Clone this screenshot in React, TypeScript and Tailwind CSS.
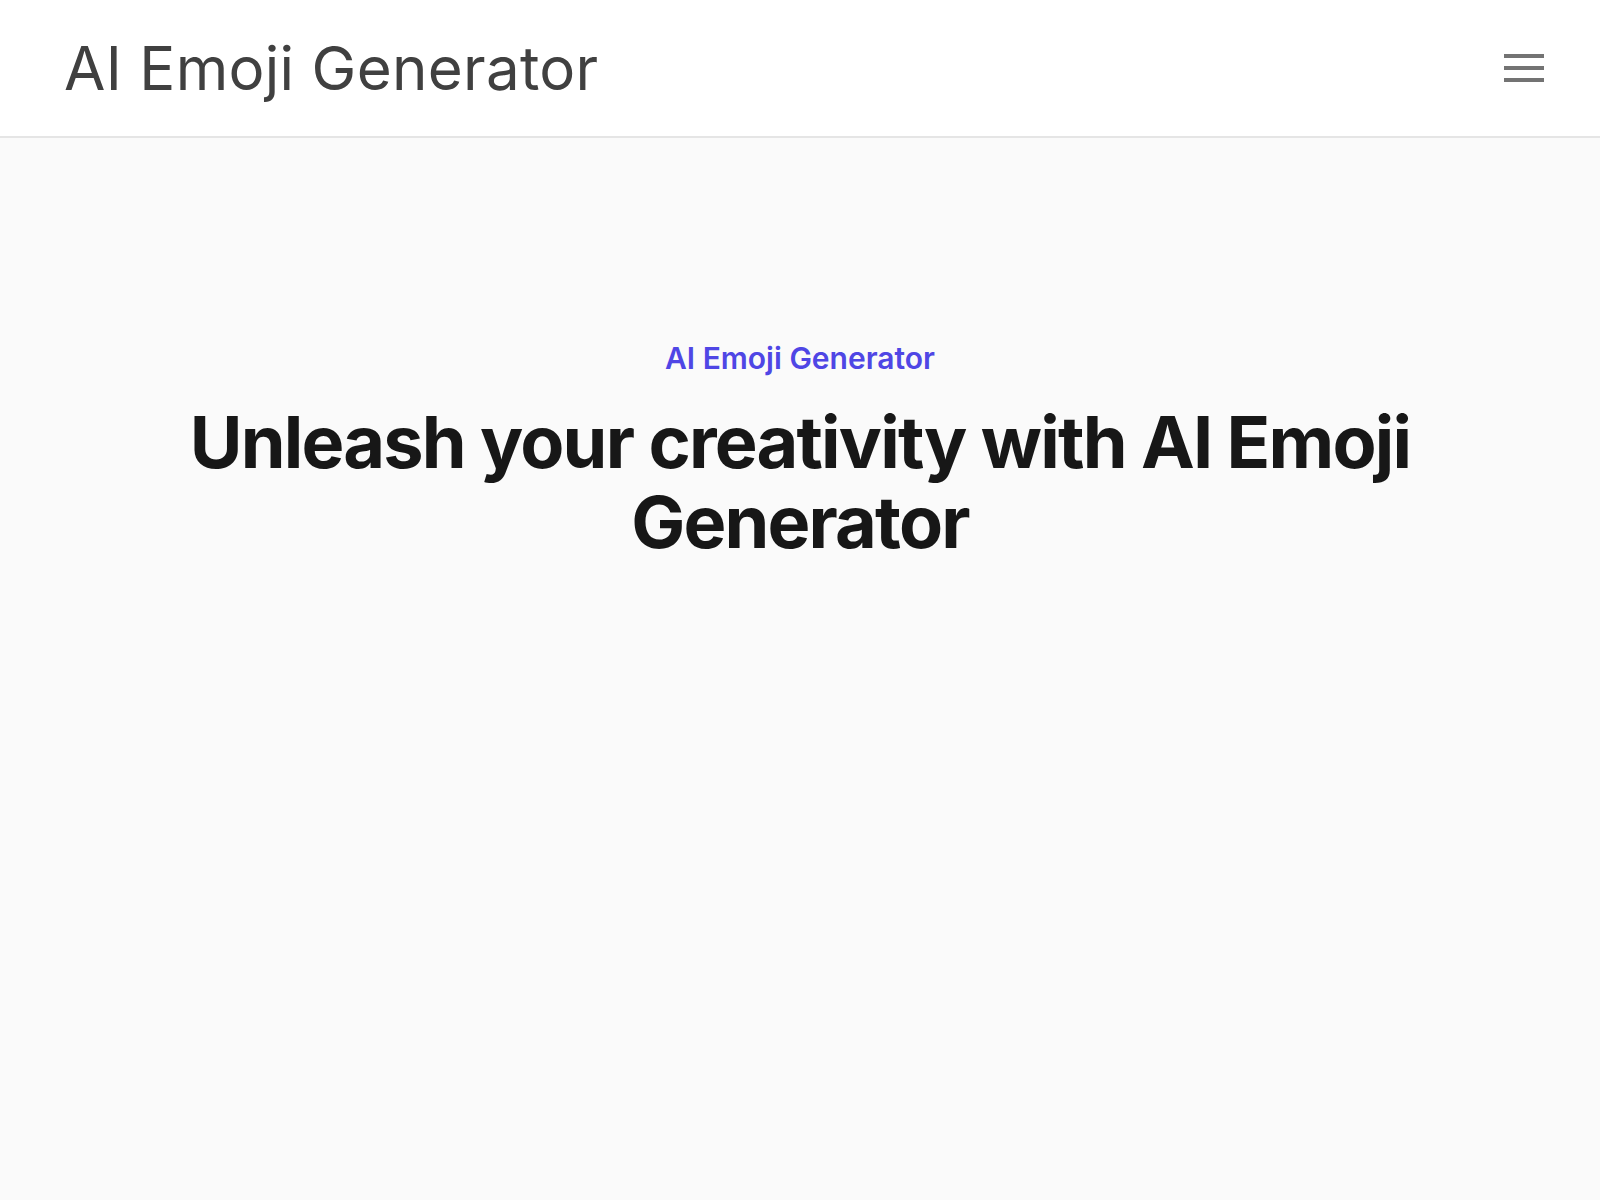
import React from "react";

function MenuButton() {
  return (
    <button className="flex flex-col gap-2 p-0" aria-label="Open menu">
      <span className="block h-[4px] w-10 bg-[#737373]" />
      <span className="block h-[4px] w-10 bg-[#737373]" />
      <span className="block h-[4px] w-10 bg-[#737373]" />
    </button>
  );
}

export default function App() {
  return (
    <div className="min-h-[1200px] bg-[#fafafa] font-['Inter','Noto_Sans',sans-serif]">
      <header className="flex h-[138px] items-center justify-between border-b-2 border-[#e5e5e5] bg-white pl-[64px] pr-[56px]">
        <h1 className="text-[60px] font-normal leading-none tracking-[0.3px] text-[#404040]">AI Emoji Generator</h1>
        <MenuButton />
      </header>

      <main className="mx-auto max-w-7xl pt-[202px] text-center">
        <p className="text-[30px] font-semibold leading-[36px] text-[#4f46e5]">
          AI Emoji Generator
        </p>
        <h2 className="mt-[26px] text-[72px] font-bold leading-[80px] tracking-tight text-[#171717]">
          Unleash your creativity with AI Emoji Generator
        </h2>
      </main>
    </div>
  );
}
